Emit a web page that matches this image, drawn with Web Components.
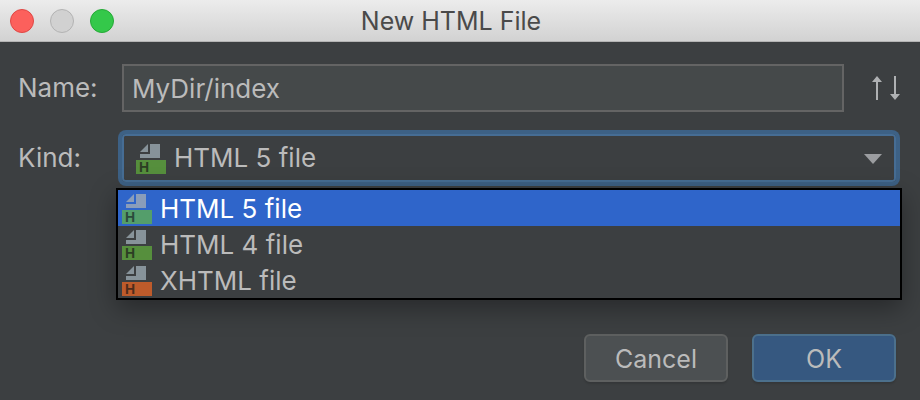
<!DOCTYPE html>
<html lang="en">
<head>
<meta charset="utf-8">
<title>New HTML File</title>
<style>
  html, body { height: 100%; }
  body { margin: 0; background: #3c3f41; color: #bbbbbb; font: 26px/36px Inter, "Liberation Sans", sans-serif; }
</style>
</head>
<body>
<dialog-window>
  <span slot="title">New HTML File</span>
  <name-field value="MyDir/index"></name-field>
  <kind-field></kind-field>
  <push-button slot="actions">Cancel</push-button>
  <push-button slot="actions" primary>OK</push-button>
</dialog-window>

<script>
const define = (name, html, setup) => {
  const template = document.createElement('template');
  template.innerHTML = html;
  customElements.define(name, class extends HTMLElement {
    constructor() {
      super();
      this.attachShadow({ mode: 'open' }).append(template.content.cloneNode(true));
    }
    connectedCallback() {
      if (setup) setup(this, this.shadowRoot);
    }
  });
};

define('file-icon', `
  <style>
    :host { display: block; flex: none; width: 30px; height: 30px; --sheet: #87939a; --badge: #568f3d; --letter: #2c3e24; }
    :host([kind="xhtml"]) { --badge: #be5b2b; --letter: #4f2c1b; }
    :host([selected]) { --sheet: #8a9dba; --badge: #549e6b; --letter: #2b4a3c; }
    svg { display: block; }
    .sheet { fill: var(--sheet); }
    .badge { fill: var(--badge); }
    text { fill: var(--letter); font: bold 14px "Liberation Sans", sans-serif; }
  </style>
  <svg width="30" height="30" viewBox="0 0 30 30">
    <path class="sheet" d="M12 0v8H4zM14 0h10v14H4v-4h10z"/>
    <path class="badge" d="M0 16h30v14H0z"/>
    <text x="3" y="28">H</text>
  </svg>`);

define('kind-option', `
  <style>
    :host { display: flex; gap: 8px; height: 30px; padding: 4px 4px 2px; }
    :host([aria-selected="true"]) { background: #2f65ca; color: #ffffff; }
    span { line-height: 30px; }
  </style>
  <file-icon></file-icon><span><slot></slot></span>`,
  (host, root) => {
    const icon = root.querySelector('file-icon');
    icon.setAttribute('kind', host.getAttribute('kind'));
    icon.toggleAttribute('selected', host.getAttribute('aria-selected') === 'true');
    host.setAttribute('role', 'option');
  });

define('name-field', `
  <style>
    :host { display: grid; grid-template-columns: 104px 1fr 28px; align-items: center; }
    input {
      box-sizing: border-box; width: 100%; height: 48px; margin: 0; padding: 0 8px;
      border: 2px solid #646464; border-radius: 0; background: #45494a; color: inherit; font: inherit; outline: 0;
    }
    button { margin: 0; padding: 0; border: 0; background: none; width: 28px; height: 24px; }
    .field { display: flex; padding-right: 28px; }
    svg { display: block; }
  </style>
  <label for="name">Name:</label>
  <div class="field"><input id="name" type="text"></div>
  <button type="button" aria-label="Previous or next name">
    <svg width="28" height="24" viewBox="0 0 28 24" fill="#afb1b3">
      <path d="M5 0l5 6H6v18H4V6H0z"/>
      <path d="M22 0h2v18h4l-5 6-5-6h4z"/>
    </svg>
  </button>`,
  (host, root) => { root.querySelector('input').value = host.getAttribute('value'); });

define('kind-field', `
  <style>
    :host { display: grid; grid-template-columns: 104px 1fr; align-items: center; padding-right: 4px; }
    .combo {
      position: relative; display: grid; align-items: center; box-sizing: border-box; height: 48px;
      border: 2px solid #466d94; border-radius: 4px; box-shadow: 0 0 0 4px #3d6185;
    }
    .combo > select, .combo > file-icon, .combo > .arrow { grid-area: 1 / 1; }
    select {
      appearance: none; width: 100%; height: 44px; margin: 0; padding: 0 48px 0 50px;
      border: 0; border-radius: 2px; background: #3c3f41; color: inherit; font: inherit; outline: 0;
    }
    .combo > file-icon { margin: 2px 0 0 12px; z-index: 1; pointer-events: none; }
    .arrow { justify-self: end; margin: 2px 12px 0 0; z-index: 1; pointer-events: none; }
    .popup {
      position: absolute; z-index: 2; top: calc(100% + 8px); left: -8px; right: -8px;
      border: 2px solid #000000; background: #3c3f41; box-shadow: 0 8px 24px rgba(0, 0, 0, 0.35);
    }
  </style>
  <label for="kind">Kind:</label>
  <div class="combo">
    <select id="kind">
      <option>HTML 5 file</option>
      <option>HTML 4 file</option>
      <option>XHTML file</option>
    </select>
    <file-icon kind="html"></file-icon>
    <svg class="arrow" width="18" height="10" viewBox="0 0 18 10"><path d="M0 0h18l-9 10z" fill="#9b9da0"/></svg>
    <div class="popup" role="listbox" aria-label="Kind">
      <kind-option kind="html" aria-selected="true">HTML 5 file</kind-option>
      <kind-option kind="html" aria-selected="false">HTML 4 file</kind-option>
      <kind-option kind="xhtml" aria-selected="false">XHTML file</kind-option>
    </div>
  </div>`);

define('push-button', `
  <style>
    :host { display: block; font-size: 25px; }
    button {
      box-sizing: border-box; min-width: 144px; height: 48px; margin: 0; padding: 2px 16px 0;
      border: 2px solid #5e6060; border-radius: 6px; background: #4c5052; color: inherit; font: inherit;
      box-shadow: 0 2px 2px rgba(0, 0, 0, 0.12);
    }
    :host([primary]) button { background: #365880; border-color: #4c708c; }
  </style>
  <button type="button"><slot></slot></button>`);

define('traffic-lights', `
  <style>
    :host { display: flex; gap: 16px; }
    button { box-sizing: border-box; width: 24px; height: 24px; margin: 0; padding: 0; border-radius: 50%; border: 1px solid; }
    .close { background: #fc605c; border-color: #df4744; }
    .minimize { background: #d1d1d1; border-color: #b3b3b3; }
    .zoom { background: #34c84a; border-color: #25a936; }
  </style>
  <button class="close" type="button" aria-label="Close"></button>
  <button class="minimize" type="button" aria-label="Minimize" disabled></button>
  <button class="zoom" type="button" aria-label="Zoom"></button>`);

define('dialog-window', `
  <style>
    :host { display: flex; flex-direction: column; min-height: 100%; }
    header {
      display: grid; grid-template-columns: 1fr auto 1fr; align-items: center; box-sizing: border-box;
      height: 42px; padding: 0 28px 0 10px; border-bottom: 1px solid #b4b4b4;
      background: linear-gradient(#ececec, #d2d2d2); color: #4a4a4a;
    }
    h1 { margin: 0; font: inherit; font-size: 25px; }
    main { display: grid; gap: 22px; padding: 22px 20px 0 18px; }
    footer { display: flex; justify-content: flex-end; gap: 24px; margin-top: auto; padding: 0 24px 18px; }
  </style>
  <header><traffic-lights></traffic-lights><h1><slot name="title"></slot></h1></header>
  <main><slot></slot></main>
  <footer><slot name="actions"></slot></footer>`);
</script>
</body>
</html>
